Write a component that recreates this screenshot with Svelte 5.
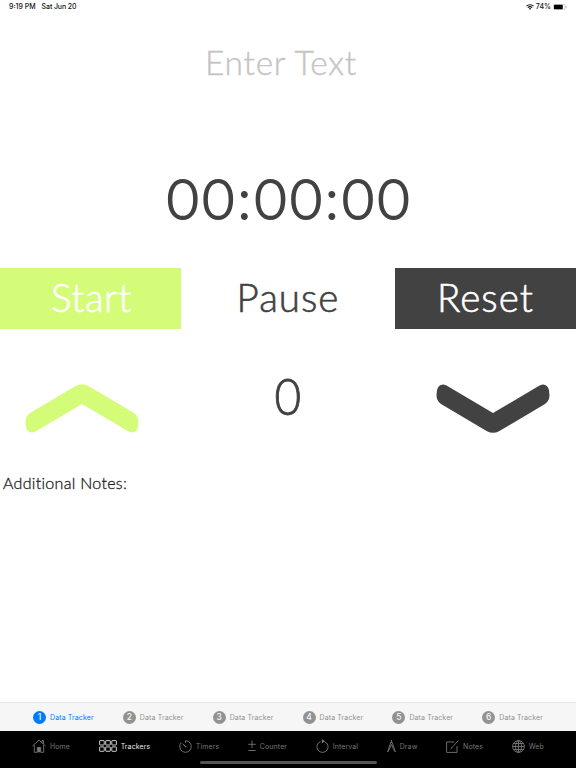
<script lang="ts">
let title = '';
let elapsed = '00:00:00';
let count = 0;
let activeTracker = 1;
let activeTab = 'Trackers';

const trackers = [1, 2, 3, 4, 5, 6];
const tabs = ['Home', 'Trackers', 'Timers', 'Counter', 'Interval', 'Draw', 'Notes', 'Web'];
</script>

<main class="screen">
  <header class="status-bar">
    <span class="time">9:19 PM</span>
    <span class="date">Sat Jun 20</span>
    <span class="spacer"></span>
    <svg class="wifi" width="8" height="6" viewBox="0 0 8 6">
      <path d="M0.5 2.2a5 5 0 0 1 7 0M1.9 3.7a3 3 0 0 1 4.2 0" fill="none" stroke="#111" stroke-width="1.1" />
      <path d="M2.9 4.6a1.6 1.6 0 0 1 2.2 0L4 5.9z" fill="#111" />
    </svg>
    <span class="percent">74%</span>
    <svg class="battery" width="14" height="6" viewBox="0 0 14 6">
      <rect x="0.3" y="0.3" width="11.8" height="5.4" rx="1.5" fill="none" stroke="#aaa" stroke-width="0.6" />
      <rect x="1" y="0.8" width="8.8" height="4.4" rx="0.7" fill="#000" />
      <path d="M12.9 2v2q0.9-0.3 0.9-1t-0.9-1" fill="#aaa" />
    </svg>
  </header>

  <div class="title">{title || 'Enter Text'}</div>
  <div class="timer"><span>{elapsed}</span></div>

  <div class="controls">
    <button class="start">Start</button>
    <button class="pause">Pause</button>
    <button class="reset">Reset</button>
  </div>

  <div class="counter">
    <button class="arrow" aria-label="Increase">
      <svg width="114" height="49" viewBox="0 0 114 49">
        <path d="M51 1.8Q57-1.2 63 1.8L109 29Q113.500 32 113.500 38Q113.500 49 106.500 48.500L103.500 47.500L57 20L10.500 47.500L7.500 48.500Q0.500 49 0.500 38Q0.500 32 5 29Z" fill="#d4fc79" />
      </svg>
    </button>
    <span class="count">{count}</span>
    <button class="arrow" aria-label="Decrease">
      <svg width="114" height="49" viewBox="0 0 114 49">
        <path d="M51 47.200Q57 50.200 63 47.200L109 20Q113.500 17 113.500 11Q113.500 0 106.500 0.500L103.500 1.500L57 29L10.500 1.500L7.500 0.500Q0.500 0 0.500 11Q0.500 17 5 20Z" fill="#424242" />
      </svg>
    </button>
  </div>

  <section class="notes">Additional Notes:</section>

  <nav class="trackers">
    {#each trackers as n}
      <div class="tracker" class:active={n === activeTracker}>
        <span class="badge">{n}</span>
        <span class="tracker-label">Data Tracker</span>
      </div>
    {/each}
  </nav>

  <nav class="tabs">
    {#each tabs as tab}
      <div class="tab" class:active={tab === activeTab}>
        {#if tab === 'Home'}
          <svg width="14" height="14" viewBox="0 0 14 14">
            <path d="M0.500 7L7 1L13.500 7M2.300 6V13.300H5.300V8.500H8.700V13.300H11.700V6M10 3.500V1.500H11.500V5" />
            <path d="M5.500 8.500h3v4.800h-3z" class="solid" />
          </svg>
        {:else if tab === 'Trackers'}
          <svg width="18" height="12" viewBox="0 0 18 12">
            {#each [0.6, 6.7, 12.8] as x}
              <rect {x} y="0.6" width="4.600" height="4.400" rx="0.5" />
              <rect {x} y="6.9" width="4.600" height="4.400" rx="0.5" />
            {/each}
          </svg>
        {:else if tab === 'Timers'}
          <svg width="13" height="13" viewBox="0 0 13 13">
            <path d="M6.500 3V0.700A5.800 5.800 0 1 1 2.200 2.600M3.600 3.700L7 7" />
            <path d="M3.400 3.500L7.600 6.500L6.500 7.600Z" class="solid" />
          </svg>
        {:else if tab === 'Counter'}
          <svg width="8" height="12" viewBox="0 0 8 12">
            <path d="M4 0.500V8M0.300 4.300H7.700M0.300 10.500H7.700" />
          </svg>
        {:else if tab === 'Interval'}
          <svg width="13" height="14" viewBox="0 0 13 14">
            <path d="M4.500 2.600A5.600 5.600 0 1 0 8.500 2.600" />
            <path d="M5.800 0L9 2.200L5.800 4.400Z" class="solid" />
          </svg>
        {:else if tab === 'Draw'}
          <svg width="9" height="13" viewBox="0 0 9 13">
            <path d="M4.500 0V2.500M3.700 2.500L0.700 12L2.300 9.500L4.500 4.500L6.700 9.500L8.300 12L5.300 2.500Z" />
          </svg>
        {:else if tab === 'Notes'}
          <svg width="13" height="13" viewBox="0 0 13 13">
            <path d="M8.500 2H0.600V12.400H11V6M12.300 0.700L6 7.500" />
            <path d="M4.600 8.900L5.400 6.900L6.600 8.100Z" class="solid" />
          </svg>
        {:else}
          <svg width="13" height="13" viewBox="0 0 13 13">
            <circle cx="6.500" cy="6.500" r="5.900" />
            <ellipse cx="6.500" cy="6.500" rx="3" ry="5.900" />
            <path d="M6.500 0.600V12.400M0.600 6.500H12.400M1.500 3.500H11.500M1.500 9.500H11.500" />
          </svg>
        {/if}
        <span>{tab}</span>
      </div>
    {/each}
  </nav>
  <div class="home-area"><div class="home-indicator"></div></div>
</main>

<style>
:global(body) {
  margin: 0;
  background: #fff;
}
.screen {
  display: flex;
  flex-direction: column;
  width: 576px;
  height: 768px;
  overflow: hidden;
  background: #fff;
  color: #424242;
  font-family: Lato, sans-serif;
}
button {
  padding: 0;
  border: none;
  background: none;
  font-family: inherit;
  color: inherit;
}
.status-bar {
  display: flex;
  align-items: center;
  height: 14px;
  padding: 0 9px;
  box-sizing: border-box;
  font: 500 7px/14px Inter, sans-serif;
  color: #111;
}
.date {
  margin-left: 6px;
  letter-spacing: -0.100px;
}
.spacer {
  flex: 1;
}
.percent {
  margin: 0 2px;
}
.title {
  height: 98px;
  padding-right: 14px;
  line-height: 97px;
  text-align: center;
  font-size: 33.500px;
  font-weight: 300;
  letter-spacing: 0.700px;
  color: #c4c4c4;
  -webkit-text-stroke: 0.400px #c4c4c4;
}
.timer {
  height: 155px;
  padding-left: 3px;
  line-height: 172px;
  text-align: center;
  font-size: 56px;
  font-weight: 300;
  letter-spacing: 3.500px;
  -webkit-text-stroke: 1.800px #424242;
}
.timer span {
  display: inline-block;
  transform: scaleX(0.985);
}
.controls {
  display: flex;
  justify-content: space-between;
  height: 61px;
  margin-top: 1px;
}
.controls button {
  width: 181px;
  padding-bottom: 2px;
  font-size: 38.500px;
  font-weight: 300;
  line-height: 59px;
  letter-spacing: 1px;
  -webkit-text-stroke: 0.600px currentColor;
}
.controls .start {
  background: #d4fc79;
  color: #fff;
  padding-left: 2px;
  letter-spacing: 0.500px;
}
.controls .reset {
  background: #424242;
  color: #fff;
}
.counter {
  display: flex;
  justify-content: space-between;
  align-items: center;
  height: 140px;
  padding: 0 26px 0 25px;
}
.arrow {
  display: flex;
  margin-top: 18px;
}
.count {
  margin-top: -6px;
  font-size: 51px;
  line-height: 60px;
  font-weight: 300;
  -webkit-text-stroke: 0.900px #424242;
  transform: scaleX(0.9);
}
.notes {
  flex: 1;
  padding: 4px 3px;
  font-size: 16px;
  line-height: 20px;
  font-weight: 300;
  letter-spacing: 0.300px;
  color: #222;
  -webkit-text-stroke: 0.300px #222;
}
.trackers {
  display: flex;
  align-items: center;
  justify-content: space-between;
  height: 29px;
  padding: 1px 33px 0;
  box-sizing: border-box;
  border-top: 1px solid #e6e6e6;
  background: #f6f6f6;
  font: 7px/12px Inter, sans-serif;
  color: #929292;
}
.tracker {
  display: flex;
  align-items: center;
  gap: 4px;
}
.badge {
  width: 13px;
  height: 13px;
  border-radius: 50%;
  background: #929292;
  color: #f6f6f6;
  text-align: center;
  font-size: 8.500px;
  line-height: 13px;
  font-weight: 500;
}
.tracker-label {
  padding-top: 1px;
  letter-spacing: 0.120px;
}
.tracker.active {
  color: #007aff;
}
.tracker.active .badge {
  background: #007aff;
}
.tabs {
  display: flex;
  align-items: center;
  justify-content: space-between;
  height: 30px;
  padding: 0 32px;
  background: #000;
  font: 7px/12px Inter, sans-serif;
  letter-spacing: 0.100px;
  color: #777;
}
.tab {
  display: flex;
  align-items: center;
  gap: 4px;
}
.tab span {
  padding-top: 1px;
}
.tab svg {
  fill: none;
  stroke: currentColor;
  stroke-width: 0.900;
}
.tab .solid {
  fill: currentColor;
  stroke: none;
}
.tab.active {
  color: #e8e8e8;
}
.home-area {
  height: 7px;
  background: #000;
}
.home-indicator {
  width: 177px;
  height: 3px;
  margin: 0 auto;
  border-radius: 2px;
  background: #555;
}
</style>
